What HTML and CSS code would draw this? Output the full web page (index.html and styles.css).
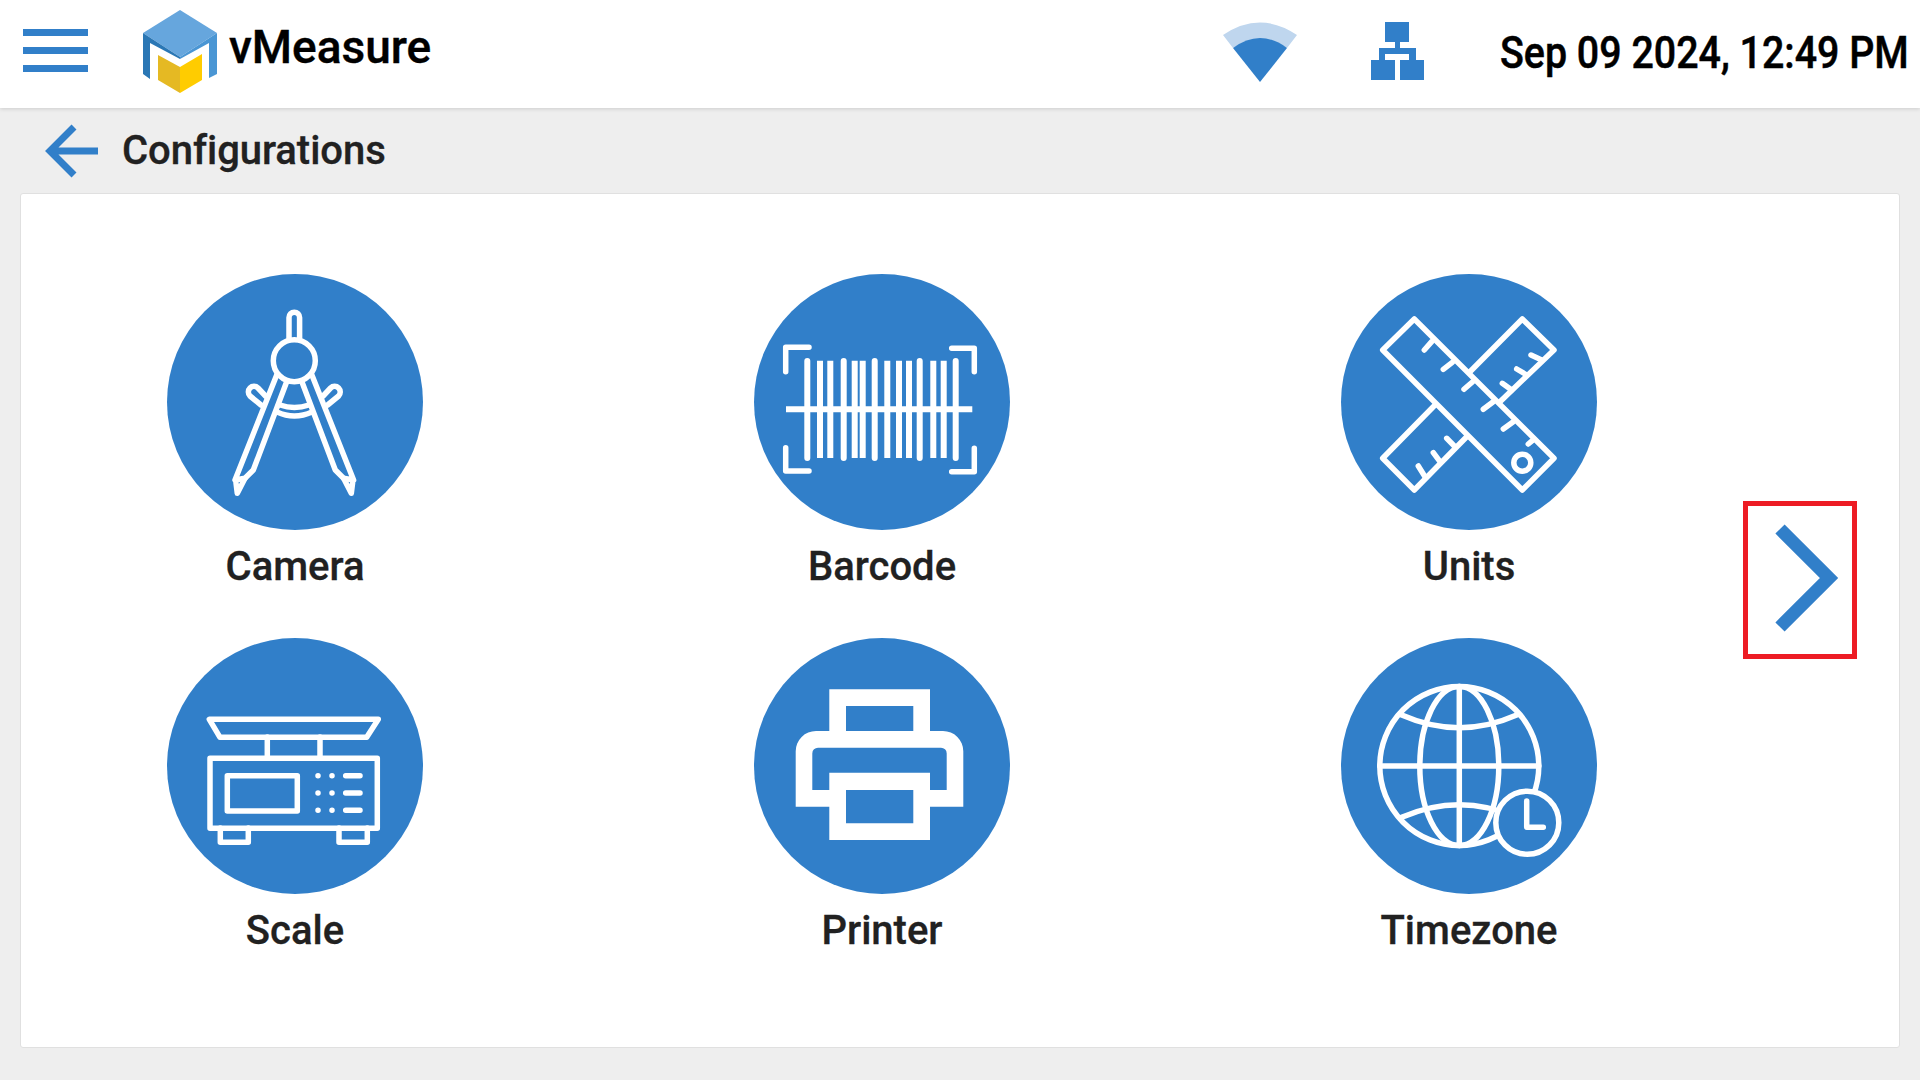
FILE: index.html
```html
<!DOCTYPE html>
<html lang="en">
<head>
  <meta charset="UTF-8" />
  <title>vMeasure: Configurations</title>
  <link rel="stylesheet" href="styles.css">
</head>
<body>
  <header class="topbar">
    <div class="menu-btn"><span></span><span></span><span></span></div>
    <svg class="logo" width="76" height="84" viewBox="0 0 76 84">
      <polygon points="37,0 74,23 37,47 0,23" fill="#66a6dd"/>
      <polygon points="0,23 37,47 37,49 7,33 7,69 0,64" fill="#2a77b5"/>
      <polygon points="74,23 37,47 37,49 66,33 66,68 74,64" fill="#4a96d4"/>
      <polygon points="15,45 37,57 37,83 15,70" fill="#e5b923"/>
      <polygon points="37,57 59,44 59,70 37,83" fill="#ffcc00"/>
    </svg>
    <div class="brand">vMeasure</div>
    <div class="status">
      <svg class="wifi" width="74" height="62" viewBox="0 0 74 62">
        <path d="M0 13 Q37 -12 74 13 L64 26 Q37 8 10 26 Z" fill="#bfd6ee"/>
        <path d="M10 26 Q37 6 64 26 L37 60 Z" fill="#317fc9"/>
      </svg>
      <svg class="network" width="54" height="60" viewBox="0 0 54 60">
        <rect x="14" y="0" width="24" height="20" fill="#317fc9"/>
        <rect x="24" y="20" width="5" height="7" fill="#317fc9"/>
        <path d="M8 26 H45 V38 H38 V32 H14 V38 H8 Z" fill="#317fc9"/>
        <rect x="0" y="38" width="24" height="20" fill="#317fc9"/>
        <rect x="29" y="38" width="24" height="20" fill="#317fc9"/>
      </svg>
      <div class="clock">Sep 09 2024, 12:49 PM</div>
    </div>
  </header>

  <div class="subbar">
    <svg class="back" width="56" height="56" viewBox="0 0 56 56">
      <path d="M54 27 H6 M30 3 L6 27 L30 51" fill="none" stroke="#317fc9" stroke-width="7"/>
    </svg>
    <h1>Configurations</h1>
  </div>

  <main class="card">
    <div class="tiles">
      <div class="tile">
        <div class="tile-icon">
          <svg width="256" height="256" viewBox="0 0 256 256" fill="none" stroke="#fff" stroke-width="5.500" stroke-linecap="round" stroke-linejoin="round">
            <circle cx="127.3" cy="86.7" r="21"/>
            <path d="M122 66 V43.500 a5.300 5.300 0 0 1 10.600 0 V66"/>
            <g>
              <path d="M109.700 101 L68 206 L78 204.300 L86.300 196 L119.700 107.700"/>
              <path d="M69 209 L70.300 219.300 L78 204.300"/>
              <path d="M98.500 122 L91 114 a5.500 5.500 0 0 0 -8 8 L94 131"/>
            </g>
            <g transform="translate(254.600 0) scale(-1 1)">
              <path d="M109.700 101 L68 206 L78 204.300 L86.300 196 L119.700 107.700"/>
              <path d="M69 209 L70.300 219.300 L78 204.300"/>
              <path d="M98.500 122 L91 114 a5.500 5.500 0 0 0 -8 8 L94 131"/>
            </g>
            <path d="M113 131 Q127.300 136 142 131"/>
            <path d="M110 138 Q127.300 146 145 138"/>
          </svg>
        </div>
        <div class="tile-label">Camera</div>
      </div>

      <div class="tile">
        <div class="tile-icon">
          <svg width="256" height="256" viewBox="0 0 256 256" fill="none" stroke="#fff" stroke-width="5.500" stroke-linecap="round" stroke-linejoin="round">
            <path d="M31.700 97.700 V73.300 H55"/>
            <path d="M197.700 74.300 H220.300 V97.700"/>
            <path d="M31.700 173.700 V197 H55"/>
            <path d="M197.700 197.700 H220.300 V174.300"/>
            <g stroke-width="6">
              <path d="M53.300 87 V184 M89.700 87 V184 M120.700 87 V184 M165.700 87 V184 M201.700 87 V184"/>
              <path stroke-linecap="butt" d="M66 86.700 V184 M76.300 86.700 V184 M100.700 86.700 V184 M108.700 86.700 V184 M133.300 86.700 V184 M145 86.700 V184 M155 86.700 V184 M179.300 86.700 V184 M189.700 86.700 V184"/>
              <path stroke-linecap="butt" d="M32 135.300 H218.300"/>
            </g>
          </svg>
        </div>
        <div class="tile-label">Barcode</div>
      </div>

      <div class="tile">
        <div class="tile-icon">
          <svg width="256" height="256" viewBox="0 0 256 256" fill="none" stroke="#fff" stroke-width="5.500" stroke-linecap="round" stroke-linejoin="round">
            <polygon points="73.300,45 41.700,76 181.300,216 213,184.300"/>
            <path d="M129 97.700 L181.300 45 L213 76 L159 127.700"/>
            <path d="M94 131 L41.700 184.300 L73.300 216 L125.700 162.700"/>
            <path d="M90.700 67.700 L83.300 76 M111.300 88.300 L102.300 95.300 M131.700 107.700 L123 115.300 M152.300 127.700 L142.300 135.300 M172.300 147.700 L162.300 155 M191.300 166.700 L187.300 170"/>
            <path d="M200.700 86 L190 81 M185.700 101 L175.700 95 M170.700 116 L161.300 109.300"/>
            <path d="M114 172.700 L105.700 164.300 M99 187.700 L92.300 178.700 M84 202.700 L77.300 192"/>
            <circle cx="181.300" cy="188.700" r="8.500"/>
          </svg>
        </div>
        <div class="tile-label">Units</div>
      </div>

      <div class="tile">
        <div class="tile-icon">
          <svg width="256" height="256" viewBox="0 0 256 256" fill="none" stroke="#fff" stroke-width="5.500" stroke-linecap="round" stroke-linejoin="round">
            <polygon points="42.300,81.300 211.300,81.300 199.700,99.300 53,99.300"/>
            <path d="M100.300 99 V120 M153 99 V120"/>
            <rect x="43" y="120.300" width="167.300" height="70"/>
            <rect x="60.300" y="137.700" width="70" height="35.300"/>
            <path d="M53.300 190 V204.300 H81.300 V190 M172 190 V204.300 H200.300 V190"/>
            <path d="M151 137.700 h.01 M165 137.700 h.01 M151 155 h.01 M165 155 h.01 M151 172.300 h.01 M165 172.300 h.01"/>
            <path d="M178.700 137.700 H193 M178.700 155 H193 M178.700 172.300 H193"/>
          </svg>
        </div>
        <div class="tile-label">Scale</div>
      </div>

      <div class="tile">
        <div class="tile-icon">
          <svg width="256" height="256" viewBox="0 0 256 256">
            <path fill="#fff" fill-rule="evenodd" d="M75.300 51.300 H176 V93 H189 a20.300 20.300 0 0 1 20.300 20.300 V168.700 H176 V202 H75.300 V168.700 H41.700 V113.300 a20.300 20.300 0 0 1 20.300 -20.300 H75.300 Z M92 68 H159.300 V93 H92 Z M64 109.700 H187 a5.700 5.700 0 0 1 5.700 5.700 V152 H176 V134.700 H75.300 V152 H58.300 V115.400 a5.700 5.700 0 0 1 5.700 -5.700 Z M92 152 H159.300 V185.300 H92 Z"/>
          </svg>
        </div>
        <div class="tile-label">Printer</div>
      </div>

      <div class="tile">
        <div class="tile-icon">
          <svg width="256" height="256" viewBox="0 0 256 256" fill="none" stroke="#fff" stroke-width="5.500" stroke-linecap="round" stroke-linejoin="round">
            <circle cx="118.300" cy="128" r="79.500"/>
            <ellipse cx="118.300" cy="128" rx="39.500" ry="79.500"/>
            <path d="M118.300 48.500 V207.500 M38.800 128 H197.800"/>
            <path d="M60.700 77 Q118.300 102.400 175.700 77"/>
            <path d="M60.700 179.300 Q118.300 154 175.700 179.300"/>
            <circle cx="186.300" cy="184.700" r="31.500" fill="#317fc9"/>
            <path d="M185.700 163 V189.300 H202.300"/>
          </svg>
        </div>
        <div class="tile-label">Timezone</div>
      </div>
    </div>

    <div class="next-btn">
      <svg width="104" height="148" viewBox="0 0 104 148">
        <path d="M32 23 L81 72 L32 121" fill="none" stroke="#317fc9" stroke-width="13"/>
      </svg>
    </div>
  </main>
</body>
</html>
```

FILE: styles.css
```css
body {
  margin: 0;
  height: 1080px;
  overflow: hidden;
  font-family: Roboto, "Liberation Sans", sans-serif;
  background: #eeeeee;
  color: #212121;
}
.topbar {
  height: 108px;
  display: flex;
  align-items: center;
  padding: 0 13px 0 23px;
  background: #fff;
  box-shadow: 0 1px 4px rgba(0, 0, 0, 0.14);
  position: relative;
}
.menu-btn {
  width: 65px;
  margin-top: -7px;
  display: flex;
  flex-direction: column;
  gap: 11px;
}
.menu-btn span {
  height: 7px;
  background: #317fc9;
}
.logo {
  margin-left: 55px;
  margin-top: -4px;
}
.brand {
  margin-left: 10px;
  margin-top: -15px;
  font-size: 46px;
  font-weight: 500;
  color: #000;
  -webkit-text-stroke: 0.4px #000;
}
.status {
  margin-left: auto;
  display: flex;
  align-items: center;
}
.wifi {
  margin-top: -3px;
  margin-right: -1px;
  position: relative;
  left: 1px;
}
.network {
  margin-left: 76px;
  margin-top: -5px;
}
.clock {
  width: 407px;
  margin-left: 75px;
  margin-top: -4px;
  font-size: 45px;
  font-weight: 500;
  color: #000;
  white-space: nowrap;
  -webkit-text-stroke: 0.5px #000;
  transform: scaleX(0.875);
  transform-origin: left center;
}
.subbar {
  height: 85px;
  display: flex;
  align-items: center;
  padding-left: 44px;
}
.subbar h1 {
  margin: 0 0 0 22px;
  font-size: 40px;
  font-weight: 500;
  color: #212121;
  letter-spacing: -0.05px;
  -webkit-text-stroke: 0.3px #212121;
}
.back {
  margin-top: 3px;
}
.card {
  margin: 0 20px;
  height: 855px;
  box-sizing: border-box;
  display: flex;
  background: #fff;
  border: 1px solid #e0e0e0;
  border-radius: 3px;
}
.tiles {
  display: grid;
  grid-template-columns: repeat(3, 256px);
  column-gap: 331px;
  row-gap: 47px;
  align-content: start;
  padding: 80px 0 0 146px;
}
.tile-icon {
  width: 256px;
  height: 256px;
  border-radius: 50%;
  background: #317fc9;
}
.tile-icon svg {
  display: block;
}
.tile-label {
  margin-top: 13px;
  height: 48px;
  line-height: 48px;
  font-size: 40px;
  font-weight: 500;
  text-align: center;
  white-space: nowrap;
  color: #212121;
  -webkit-text-stroke: 0.3px #212121;
}
.next-btn {
  width: 114px;
  height: 158px;
  box-sizing: border-box;
  margin: 307px 42px 0 auto;
  border: 5px solid #ed1c24;
}
.next-btn svg {
  display: block;
}
```
